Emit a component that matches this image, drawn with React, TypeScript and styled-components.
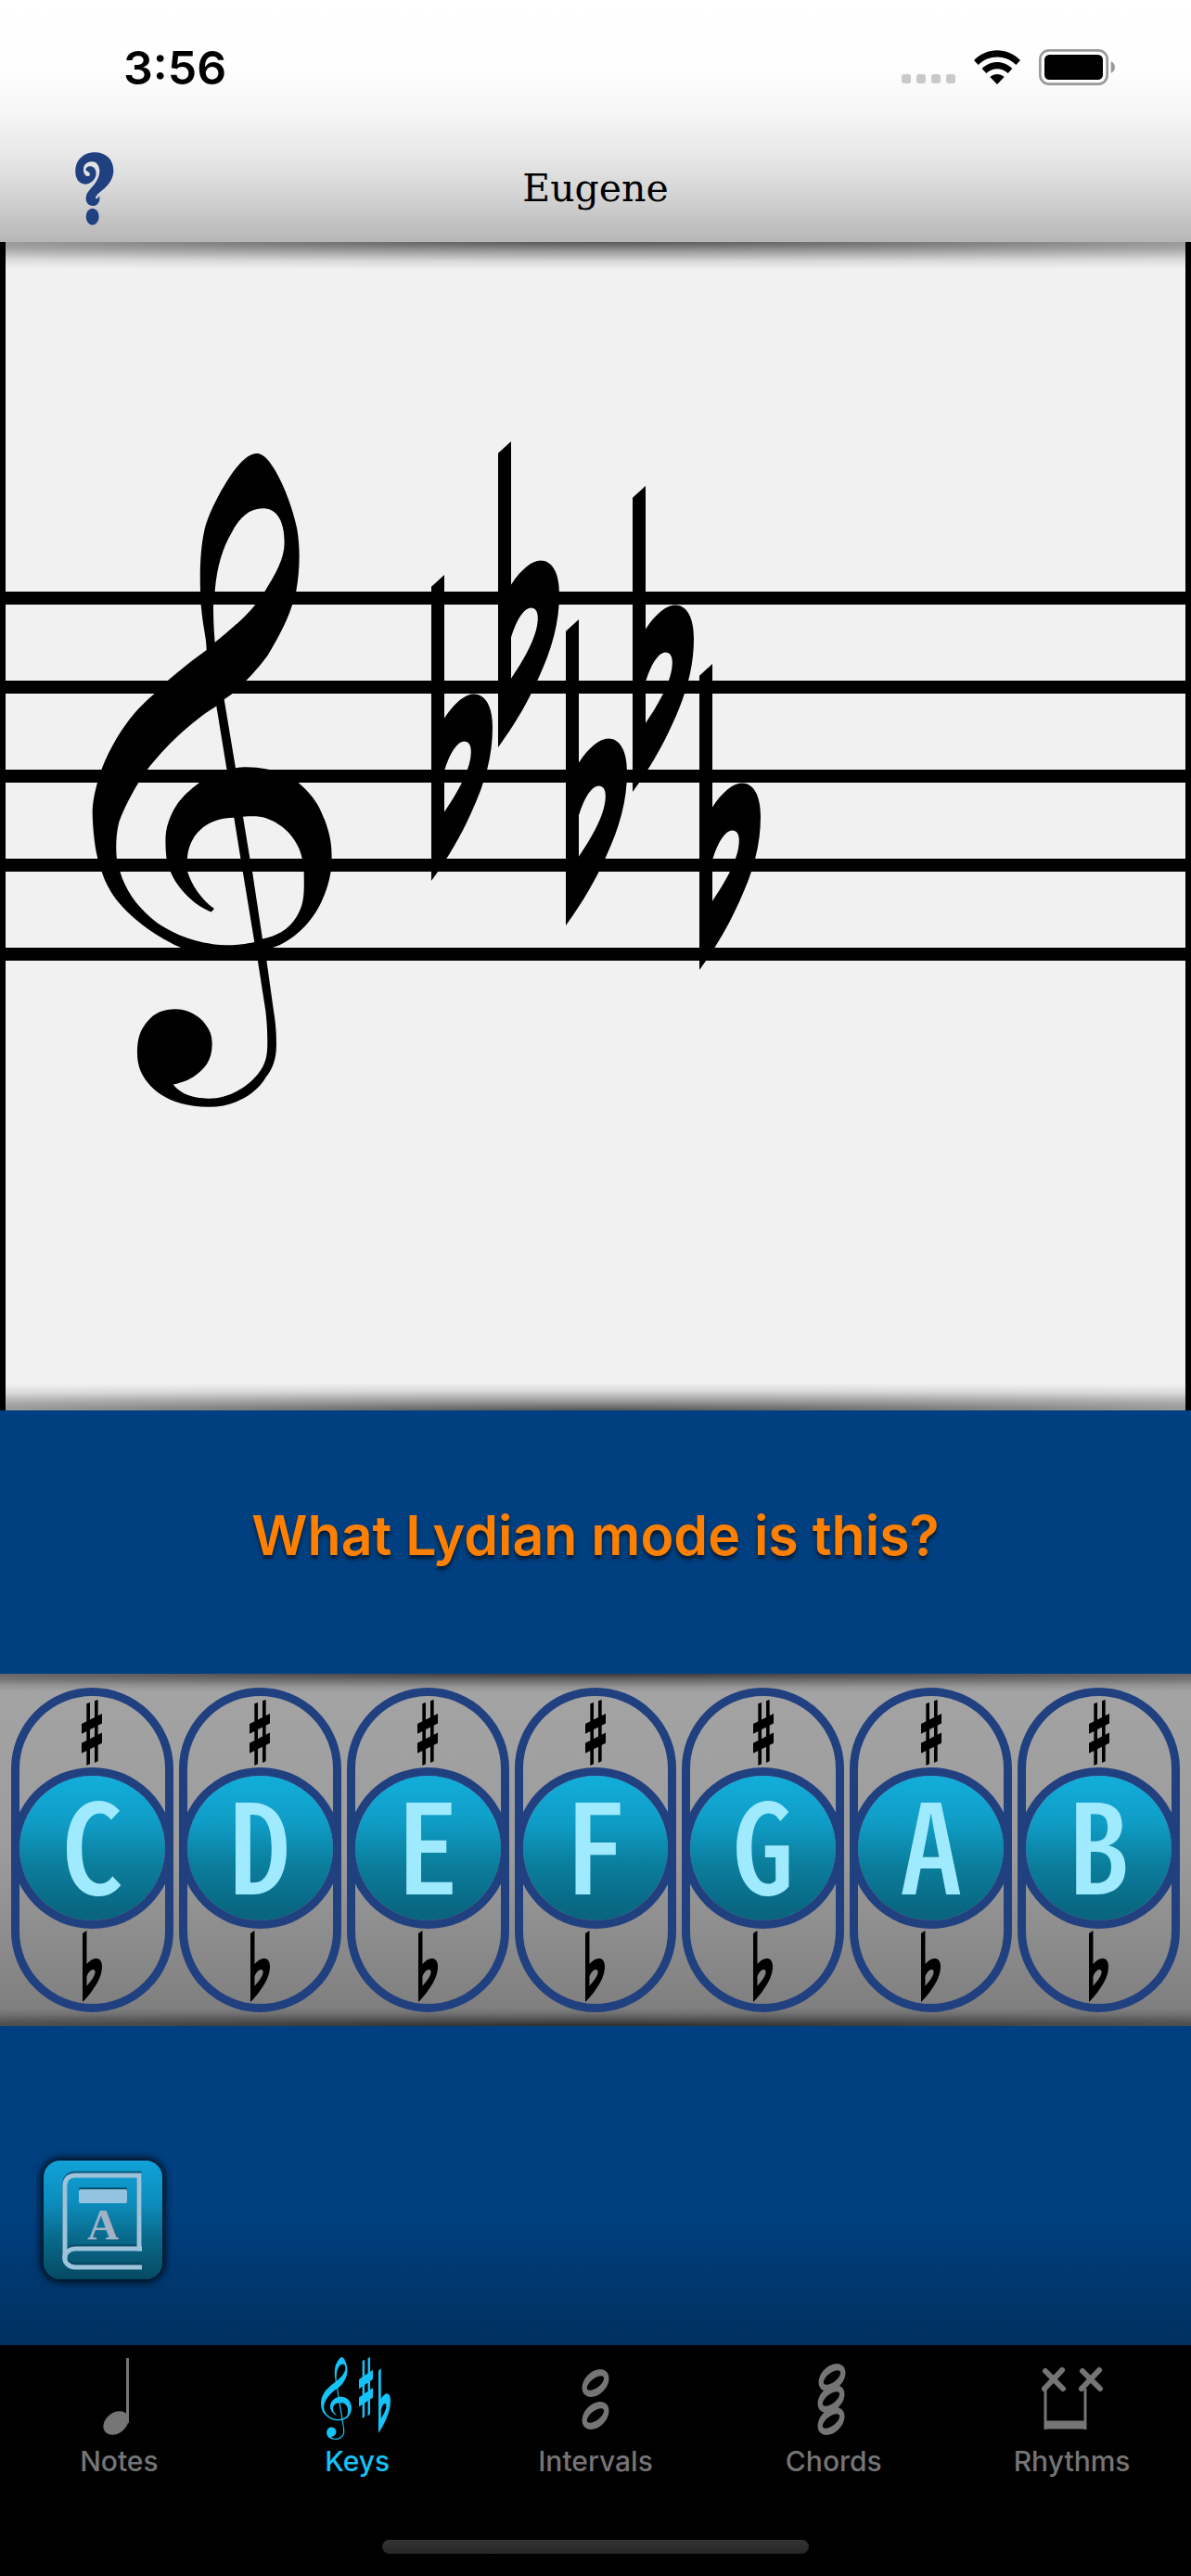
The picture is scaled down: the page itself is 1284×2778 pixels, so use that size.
import React, { useState } from "react";
import styled, { createGlobalStyle, css } from "styled-components";

const sans = `Inter, Roboto, "Liberation Sans", sans-serif`;
const ink = "#204080";

const GlobalStyle = createGlobalStyle`
  *, *::before, *::after { box-sizing: border-box; }
  body { margin: 0; background: #004080; font-family: ${sans}; }
  button { margin: 0; padding: 0; border: 0; background: none; color: inherit; font: inherit; cursor: pointer; }
  svg { display: block; }
`;

const Screen = styled.div`
  display: flex;
  flex-direction: column;
  min-height: 100vh;
`;

/* ---------- header ---------- */

const Header = styled.header`
  background: linear-gradient(#fff 0%, #fefefe 28%, #f6f6f6 46%, #e6e6e6 66%, #cfcfcf 84%, #b6b6b6 100%);
`;

const StatusBar = styled.div`
  display: flex;
  align-items: center;
  justify-content: space-between;
  height: 145px;
  padding: 0 82px 0 133px;
`;

const Clock = styled.time`
  font-size: 50px;
  line-height: 60px;
  font-weight: 600;
  color: #000;
`;

const StatusIcons = styled.div`
  display: flex;
  align-items: flex-end;
  gap: 20px;
`;

const Signal = styled.div`
  display: flex;
  gap: 6px;
  padding-bottom: 2px;
`;

const SignalDot = styled.span`
  width: 10px;
  height: 10px;
  border-radius: 3px;
  background: #c9c9c9;
`;

const NavBar = styled.div`
  display: grid;
  grid-template-columns: 1fr auto 1fr;
  align-items: center;
  height: 116px;
  padding: 0 81px;
`;

const HelpButton = styled.button`
  justify-self: start;
`;

const Title = styled.h1`
  margin: 0;
  font: 400 41px/56px "DejaVu Serif", serif;
  color: #000;
`;

/* ---------- panels with an inner shade ---------- */

const innerShade = css<{ $depth: number }>`
  position: relative;
  &::before, &::after {
    content: "";
    position: absolute;
    left: 0;
    right: 0;
    height: ${(p) => p.$depth}px;
    pointer-events: none;
  }
  &::before {
    top: 0;
    background: radial-gradient(ellipse 150% 100% at 50% 0, rgba(0,0,0,.64), rgba(0,0,0,.36) 33%, rgba(0,0,0,.1) 70%, transparent);
  }
  &::after {
    bottom: 0;
    background: radial-gradient(ellipse 150% 100% at 50% 100%, rgba(0,0,0,.64), rgba(0,0,0,.36) 33%, rgba(0,0,0,.1) 70%, transparent);
  }
`;

const StaffPanel = styled.main<{ $depth: number }>`
  ${innerShade}
  background: #f1f1f1;
  border: solid #000;
  border-width: 0 6px;
`;

const StaffDrawing = styled.svg`
  width: 100%;
  height: auto;
`;

const Prompt = styled.section`
  display: flex;
  justify-content: center;
  padding: 95px 40px 109px;
  background: #004080;
`;

const PromptText = styled.h2`
  margin: 0;
  font-size: 59px;
  line-height: 80px;
  font-weight: 600;
  text-align: center;
  color: #ff8000;
  text-shadow: 0 4px 4px rgba(0, 0, 0, 0.6);
`;

const KeyStrip = styled.section<{ $depth: number }>`
  ${innerShade}
  display: grid;
  grid-template-columns: repeat(7, 1fr);
  gap: 6px;
  padding: 15px 12px;
  background: linear-gradient(#a4a4a4, #9c9c9c 50%, #7c7c7c);
`;

const KeyPill = styled.div`
  position: relative;
  z-index: 1;
  display: flex;
  flex-direction: column;
  height: 350px;
  border: 9px solid ${ink};
  border-radius: 88px;
`;

const AccidentalButton = styled.button<{ $side: "sharp" | "flat" }>`
  flex: 1;
  display: flex;
  justify-content: center;
  align-items: ${(p) => (p.$side === "sharp" ? "flex-end" : "flex-start")};
  padding: 2px 0;
`;

const NoteButton = styled.button`
  flex: none;
  height: 174px;
  margin: 0 -9px;
  padding-bottom: 16px;
  border: 9px solid ${ink};
  border-radius: 50%;
  background: linear-gradient(#12aedb, #0f9cc5 33%, #0b7f9e 60%, #09627c 100%) padding-box;
  color: #a0eaff;
  font: 500 134px/140px "Noto Sans CJK JP", sans-serif;
  font-feature-settings: "hwid";
`;

const Actions = styled.section`
  flex: 1;
  padding: 145px 47px 71px;
  background: linear-gradient(#004080 45%, #003f7e 60%, #00305f);
`;

const BookButton = styled.button`
  display: block;
  width: 128px;
  height: 128px;
  border-radius: 18px;
  background: linear-gradient(#11a2d8, #0c8dbd 35%, #096a8b 65%, #064a63);
  box-shadow: 0 0 8px 3px rgba(0, 0, 0, 0.8);
`;

/* ---------- tab bar ---------- */

const TabBar = styled.footer`
  display: flex;
  flex-direction: column;
  align-items: center;
  justify-content: space-between;
  height: 249px;
  padding: 13px 0 24px;
  background: #000;
`;

const Tabs = styled.nav`
  align-self: stretch;
  display: grid;
  grid-template-columns: repeat(5, 1fr);
`;

const Tab = styled.button<{ $active: boolean }>`
  display: flex;
  flex-direction: column;
  align-items: center;
  gap: 4px;
  color: ${(p) => (p.$active ? "#14c4f8" : "#757575")};
  font-size: 30px;
  line-height: 36px;
  font-weight: 500;
`;

const HomeIndicator = styled.div`
  width: 460px;
  height: 15px;
  border-radius: 8px;
  background: linear-gradient(#333, #272727);
`;

/* ---------- drawings ---------- */

const clefPath =
  "M653,60C700,62 760,160 780,225C792,270 790,320 778,366C776,380 770,390 765,397C745,440 715,475 685,510C660,533 635,552 618,564C600,577 585,586 570,595L545,607L582,760C610,756 650,758 680,762C720,766 760,778 785,792C840,825 855,848 870,875C888,908 893,930 893,960L890,990C880,1035 850,1075 830,1092C795,1125 750,1148 708,1158L676,1165L682,1187L705,1300C712,1330 714,1350 714,1375C714,1410 700,1430 680,1448C640,1495 560,1514 495,1514C430,1514 375,1502 340,1486C295,1464 264,1435 264,1395C264,1355 278,1340 295,1325C320,1303 350,1296 388,1296C425,1296 455,1308 475,1322C500,1342 506,1355 506,1375C506,1410 480,1430 455,1442C430,1455 405,1460 380,1464C405,1486 445,1495 495,1495C560,1495 620,1470 655,1440C680,1418 685,1400 685,1370C685,1340 682,1318 679,1300L650,1172C600,1180 500,1182 400,1158C310,1130 240,1090 200,1056C175,1035 155,1005 149,990C140,972 135,960 135,958C125,930 120,890 119,860C119,835 128,810 135,792C140,780 145,770 149,762C175,715 215,670 255,638C275,622 300,605 318,595L365,564C400,543 445,518 488,497C488,480 482,460 480,450C475,430 472,410 470,397L468,366C466,320 468,270 482,228C500,180 560,110 590,87C620,63 640,60 653,60Z" +
  "M515,480C512,450 510,430 510,397C511,385 514,375 515,366C522,310 540,270 570,235C600,195 635,182 672,182C720,183 740,215 740,258C740,295 710,330 677,366C668,376 655,388 645,397C605,430 555,458 515,480Z" +
  "M520,622L554,765C520,770 490,780 465,792C400,825 380,850 365,880C353,900 354,930 358,958C362,975 368,985 371,990C395,1030 450,1066 503,1080L513,1073C470,1052 440,1020 426,990C425,978 425,968 426,958C435,900 500,870 577,870L598,960L643,1147C610,1152 580,1154 553,1154C470,1153 370,1130 310,1094C260,1065 225,1030 208,990C202,975 198,965 197,958C194,930 196,905 205,880C220,850 250,812 268,792C280,778 290,768 298,762C350,715 440,655 520,622Z" +
  "M606,868C640,866 660,867 680,871C740,885 785,920 797,960C802,975 803,985 803,990C804,1040 805,1060 780,1090C755,1120 710,1135 669,1140L636,990L628,960Z";

const flatPath =
  "M0,33L42,0V404C75,360 110,336 137,336C175,336 198,370 198,430C198,510 175,585 128,672C95,735 60,790 0,862Z" +
  "M42,552C60,500 85,470 105,469C125,469 130,485 128,505C126,540 100,595 42,668Z";

const sharpPath =
  "M16,13L27,9V209L16,214ZM42,4L53,0V200L42,205ZM0,78L66,45V77L0,111ZM0,141L66,107V141L0,174Z";

const staffLines = [377, 473, 569, 665, 761];
const keySignature = [
  [459, 359],
  [531, 215],
  [604, 407],
  [676, 263],
  [748, 455],
];

const Staff = () => (
  <StaffDrawing viewBox="0 0 1272 1260" role="img" aria-label="Treble clef with five flats">
    {staffLines.map((y) => (
      <rect key={y} x="0" y={y} width="1272" height="14" />
    ))}
    <path d={clefPath} fillRule="evenodd" transform="translate(54 199) scale(.3333 .4847)" />
    {keySignature.map(([x, y]) => (
      <path key={x} d={flatPath} fillRule="evenodd" transform={`translate(${x} ${y}) scale(.3333 .3827)`} />
    ))}
  </StaffDrawing>
);

const SharpIcon = () => (
  <svg width="22" height="71" viewBox="0 0 66 214" preserveAspectRatio="none" aria-hidden="true">
    <path d={sharpPath} fill="#000" />
  </svg>
);

const FlatIcon = () => (
  <svg width="21" height="77" viewBox="0 0 198 862" preserveAspectRatio="none" aria-hidden="true">
    <path d={flatPath} fillRule="evenodd" fill="#000" />
  </svg>
);

const HelpIcon = () => (
  <svg width="42" height="79" viewBox="34 37 126 237" fill={ink} aria-hidden="true">
    <path d="M35,103C33,65 60,38 97,38C135,38 158,62 158,97C158,125 140,146 122,160C110,170 100,178 100,186C103,190 110,186 112,177C117,195 108,211 91,211C77,211 68,200 69,185C70,168 84,157 95,143C108,125 114,110 113,96C111,78 102,68 88,68C70,68 60,80 61,96C62,108 68,115 76,115C84,114 84,103 74,99C64,98 68,83 83,83C98,84 104,98 101,113C97,130 82,141 66,141C48,140 36,125 35,103Z" />
    <ellipse cx="90" cy="246" rx="21" ry="27" />
  </svg>
);

const WifiIcon = () => (
  <svg width="50" height="38" viewBox="0 0 150 114" aria-hidden="true">
    <path d="M0,33C42,-10 108,-10 150,33L136,48C102,14 48,14 14,48Z" />
    <path d="M26,60C54,32 96,32 124,60L110,75C90,56 60,56 40,75Z" />
    <path d="M52,87C66,75 84,75 98,87L75,111Z" />
  </svg>
);

const BatteryIcon = () => (
  <svg width="82" height="39" viewBox="0 0 246 117" aria-hidden="true">
    <rect x="4" y="4" width="217" height="109" rx="29" fill="none" stroke="#999" strokeWidth="8" />
    <rect x="18" y="18" width="189" height="81" rx="16" />
    <path d="M233,40C250,46 250,71 233,77Z" fill="#999" />
  </svg>
);

const BookIcon = () => (
  <svg width="128" height="128" viewBox="0 0 128 128" aria-hidden="true">
    <g fill="none" stroke="#053c58" strokeOpacity=".7" strokeWidth="5" transform="translate(0 -2)">
      <path d="M106,95H103V16H34C27,16 23,20 23,27V106" />
      <path d="M106,95H34C19,96 19,114 34,115H106" />
    </g>
    <g fill="none" stroke="#9cc3da" strokeWidth="5">
      <path d="M106,95H103V16H34C27,16 23,20 23,27V106" />
      <path d="M106,95H34C19,96 19,114 34,115H106" />
    </g>
    <rect x="38" y="29" width="52" height="16" rx="2" fill="#06506f" />
    <rect x="38" y="31" width="52" height="15" rx="2" fill="#93c3de" />
    <text x="64" y="85" textAnchor="middle" fontFamily="'Liberation Serif', serif" fontWeight="700" fontSize="47" fill="#a3b3c6">A</text>
  </svg>
);

const WholeNotes = ({ at }: { at: number[][] }) => (
  <>
    {at.map(([x, y]) => (
      <ellipse key={y} cx={x} cy={y} rx="17" ry="12" fill="currentColor" transform={`rotate(-48 ${x} ${y})`} />
    ))}
    {at.map(([x, y]) => (
      <ellipse key={y} cx={x} cy={y} rx="11" ry="5" fill="#000" transform={`rotate(-38 ${x} ${y})`} />
    ))}
  </>
);

const tabDrawings: Record<string, React.ReactNode> = {
  Notes: (
    <g fill="currentColor">
      <rect x="53" y="1" width="3" height="70" />
      <ellipse cx="42" cy="71" rx="15" ry="11" transform="rotate(-38 42 71)" />
    </g>
  ),
  Keys: (
    <g fill="currentColor" fillRule="evenodd">
      <path d={clefPath} transform="translate(.9 -3.7) scale(.0426 .0612)" />
      <path d={sharpPath} fillRule="nonzero" transform="translate(47 0) scale(.227 .308)" />
      <path d={flatPath} transform="translate(68 12) scale(.0657 .0812)" />
    </g>
  ),
  Intervals: <WholeNotes at={[[45, 28], [45, 63]]} />,
  Chords: <WholeNotes at={[[43, 22], [42, 45], [42, 69]]} />,
  Rhythms: (
    <g stroke="currentColor" fill="none">
      <path d="M16,15L35,34M34,14L15,34M56,15L75,34M74,14L55,34" strokeWidth="6" strokeLinecap="round" />
      <path d="M16,34V78M59,34V78" strokeWidth="3" />
      <path d="M15,73H60" strokeWidth="9" />
    </g>
  ),
};

/* ---------- page ---------- */

const noteNames = ["C", "D", "E", "F", "G", "A", "B"];

export default function App() {
  const [tab, setTab] = useState("Keys");

  return (
    <Screen>
      <GlobalStyle />
      <Header>
        <StatusBar>
          <Clock>3:56</Clock>
          <StatusIcons>
            <Signal>
              {[0, 1, 2, 3].map((n) => (
                <SignalDot key={n} />
              ))}
            </Signal>
            <WifiIcon />
            <BatteryIcon />
          </StatusIcons>
        </StatusBar>
        <NavBar>
          <HelpButton aria-label="Help">
            <HelpIcon />
          </HelpButton>
          <Title>Eugene</Title>
        </NavBar>
      </Header>

      <StaffPanel $depth={30}>
        <Staff />
      </StaffPanel>

      <Prompt>
        <PromptText>What Lydian mode is this?</PromptText>
      </Prompt>

      <KeyStrip $depth={20}>
        {noteNames.map((name) => (
          <KeyPill key={name}>
            <AccidentalButton $side="sharp" aria-label={`${name} sharp`}>
              <SharpIcon />
            </AccidentalButton>
            <NoteButton>{name}</NoteButton>
            <AccidentalButton $side="flat" aria-label={`${name} flat`}>
              <FlatIcon />
            </AccidentalButton>
          </KeyPill>
        ))}
      </KeyStrip>

      <Actions>
        <BookButton aria-label="Reference">
          <BookIcon />
        </BookButton>
      </Actions>

      <TabBar>
        <Tabs>
          {Object.keys(tabDrawings).map((name) => (
            <Tab key={name} $active={name === tab} onClick={() => setTab(name)}>
              <svg width="90" height="90" viewBox="0 0 90 90" aria-hidden="true">
                {tabDrawings[name]}
              </svg>
              {name}
            </Tab>
          ))}
        </Tabs>
        <HomeIndicator />
      </TabBar>
    </Screen>
  );
}
